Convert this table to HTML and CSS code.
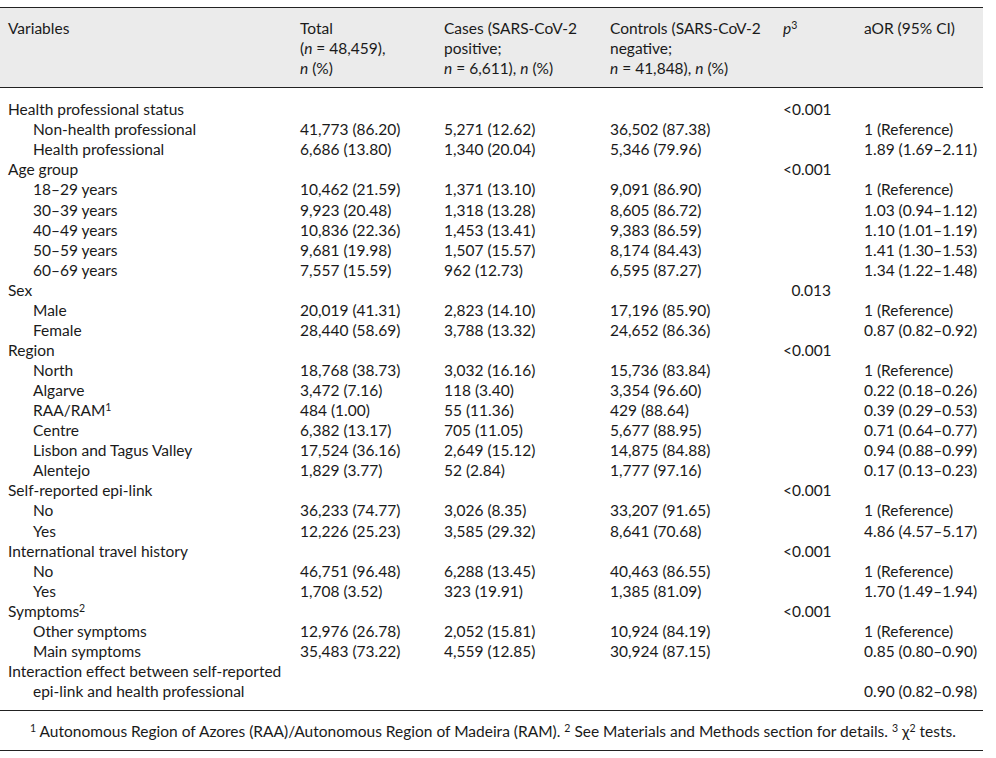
FILE: index.html
```html
<!DOCTYPE html>
<html lang="en">
<head>
<meta charset="utf-8">
<title>Table</title>
<link rel="stylesheet" href="styles.css">
</head>
<body>
<div class="page">
<table class="t">
<colgroup>
<col class="c1"><col class="c2"><col class="c3"><col class="c4"><col class="c5"><col class="c6">
</colgroup>
<thead>
<tr>
<th class="var">Variables</th>
<th>Total<br>(<i>n</i> = 48,459),<br><i>n</i> (%)</th>
<th>Cases (SARS-CoV-2<br>positive;<br><i>n</i> = 6,611), <i>n</i> (%)</th>
<th>Controls (SARS-CoV-2<br>negative;<br><i>n</i> = 41,848), <i>n</i> (%)</th>
<th><i>p</i><sup>3</sup></th>
<th>aOR (95% CI)</th>
</tr>
</thead>
<tbody>
<tr class="first"><td class="var">Health professional status</td><td></td><td></td><td></td><td class="p">&lt;0.001</td><td></td></tr>
<tr><td class="var sub">Non-health professional</td><td>41,773 (86.20)</td><td>5,271 (12.62)</td><td>36,502 (87.38)</td><td class="p"></td><td>1 (Reference)</td></tr>
<tr><td class="var sub">Health professional</td><td>6,686 (13.80)</td><td>1,340 (20.04)</td><td>5,346 (79.96)</td><td class="p"></td><td>1.89 (1.69–2.11)</td></tr>
<tr><td class="var">Age group</td><td></td><td></td><td></td><td class="p">&lt;0.001</td><td></td></tr>
<tr><td class="var sub">18–29 years</td><td>10,462 (21.59)</td><td>1,371 (13.10)</td><td>9,091 (86.90)</td><td class="p"></td><td>1 (Reference)</td></tr>
<tr><td class="var sub">30–39 years</td><td>9,923 (20.48)</td><td>1,318 (13.28)</td><td>8,605 (86.72)</td><td class="p"></td><td>1.03 (0.94–1.12)</td></tr>
<tr><td class="var sub">40–49 years</td><td>10,836 (22.36)</td><td>1,453 (13.41)</td><td>9,383 (86.59)</td><td class="p"></td><td>1.10 (1.01–1.19)</td></tr>
<tr><td class="var sub">50–59 years</td><td>9,681 (19.98)</td><td>1,507 (15.57)</td><td>8,174 (84.43)</td><td class="p"></td><td>1.41 (1.30–1.53)</td></tr>
<tr><td class="var sub">60–69 years</td><td>7,557 (15.59)</td><td>962 (12.73)</td><td>6,595 (87.27)</td><td class="p"></td><td>1.34 (1.22–1.48)</td></tr>
<tr><td class="var">Sex</td><td></td><td></td><td></td><td class="p">0.013</td><td></td></tr>
<tr><td class="var sub">Male</td><td>20,019 (41.31)</td><td>2,823 (14.10)</td><td>17,196 (85.90)</td><td class="p"></td><td>1 (Reference)</td></tr>
<tr><td class="var sub">Female</td><td>28,440 (58.69)</td><td>3,788 (13.32)</td><td>24,652 (86.36)</td><td class="p"></td><td>0.87 (0.82–0.92)</td></tr>
<tr><td class="var">Region</td><td></td><td></td><td></td><td class="p">&lt;0.001</td><td></td></tr>
<tr><td class="var sub">North</td><td>18,768 (38.73)</td><td>3,032 (16.16)</td><td>15,736 (83.84)</td><td class="p"></td><td>1 (Reference)</td></tr>
<tr><td class="var sub">Algarve</td><td>3,472 (7.16)</td><td>118 (3.40)</td><td>3,354 (96.60)</td><td class="p"></td><td>0.22 (0.18–0.26)</td></tr>
<tr><td class="var sub">RAA/RAM<sup>1</sup></td><td>484 (1.00)</td><td>55 (11.36)</td><td>429 (88.64)</td><td class="p"></td><td>0.39 (0.29–0.53)</td></tr>
<tr><td class="var sub">Centre</td><td>6,382 (13.17)</td><td>705 (11.05)</td><td>5,677 (88.95)</td><td class="p"></td><td>0.71 (0.64–0.77)</td></tr>
<tr><td class="var sub">Lisbon and Tagus Valley</td><td>17,524 (36.16)</td><td>2,649 (15.12)</td><td>14,875 (84.88)</td><td class="p"></td><td>0.94 (0.88–0.99)</td></tr>
<tr><td class="var sub">Alentejo</td><td>1,829 (3.77)</td><td>52 (2.84)</td><td>1,777 (97.16)</td><td class="p"></td><td>0.17 (0.13–0.23)</td></tr>
<tr><td class="var">Self-reported epi-link</td><td></td><td></td><td></td><td class="p">&lt;0.001</td><td></td></tr>
<tr><td class="var sub">No</td><td>36,233 (74.77)</td><td>3,026 (8.35)</td><td>33,207 (91.65)</td><td class="p"></td><td>1 (Reference)</td></tr>
<tr><td class="var sub">Yes</td><td>12,226 (25.23)</td><td>3,585 (29.32)</td><td>8,641 (70.68)</td><td class="p"></td><td>4.86 (4.57–5.17)</td></tr>
<tr><td class="var">International travel history</td><td></td><td></td><td></td><td class="p">&lt;0.001</td><td></td></tr>
<tr><td class="var sub">No</td><td>46,751 (96.48)</td><td>6,288 (13.45)</td><td>40,463 (86.55)</td><td class="p"></td><td>1 (Reference)</td></tr>
<tr><td class="var sub">Yes</td><td>1,708 (3.52)</td><td>323 (19.91)</td><td>1,385 (81.09)</td><td class="p"></td><td>1.70 (1.49–1.94)</td></tr>
<tr><td class="var">Symptoms<sup>2</sup></td><td></td><td></td><td></td><td class="p">&lt;0.001</td><td></td></tr>
<tr><td class="var sub">Other symptoms</td><td>12,976 (26.78)</td><td>2,052 (15.81)</td><td>10,924 (84.19)</td><td class="p"></td><td>1 (Reference)</td></tr>
<tr><td class="var sub">Main symptoms</td><td>35,483 (73.22)</td><td>4,559 (12.85)</td><td>30,924 (87.15)</td><td class="p"></td><td>0.85 (0.80–0.90)</td></tr>
<tr><td class="var">Interaction effect between self-reported</td><td></td><td></td><td></td><td class="p"></td><td></td></tr>
<tr class="last"><td class="var sub">epi-link and health professional</td><td></td><td></td><td></td><td class="p"></td><td>0.90 (0.82–0.98)</td></tr>
</tbody>
</table>
<p class="foot"><sup>1</sup> Autonomous Region of Azores (RAA)/Autonomous Region of Madeira (RAM). <sup>2</sup> See Materials and Methods section for details. <sup>3</sup> χ<sup>2</sup> tests.</p>
</div>
</body>
</html>
```
FILE: styles.css
```css
html, body {
  margin: 0;
  padding: 0;
  background: #ffffff;
}
body {
  font-family: Lato, "Open Sans", sans-serif;
  font-size: 15.5px;
  line-height: 20.07px;
  color: #1a1a1a;
}
.page {
  width: 983px;
  padding-top: 7px;
}
.t {
  width: 983px;
  border-collapse: collapse;
  table-layout: fixed;
  border-top: 1.5px solid #222;
  border-bottom: 1.5px solid #222;
}
.c1 { width: 300px; }
.c2 { width: 144px; }
.c3 { width: 166px; }
.c4 { width: 173px; }
.c5 { width: 81px; }
.c6 { width: 119px; }
.t th, .t td {
  padding: 0;
  text-align: left;
  vertical-align: top;
  white-space: nowrap;
  font-weight: normal;
}
.t thead th {
  background: #ebebeb;
  padding-top: 10px;
  padding-bottom: 9px;
  border-bottom: 1.5px solid #222;
}
.t .var { padding-left: 8px; }
.t .var.sub { padding-left: 33px; }
.t td.p { text-align: right; padding-right: 33px; }
.t tr.first td { padding-top: 11px; }
.t tr.last td { padding-bottom: 9px; }
sup {
  font-size: 0.68em;
  line-height: 0;
  vertical-align: 0.5em;
}
.foot {
  margin: 0;
  width: 983px;
  box-sizing: border-box;
  padding: 10px 0 9px 30px;
  border-bottom: 1.5px solid #222;
}
```
